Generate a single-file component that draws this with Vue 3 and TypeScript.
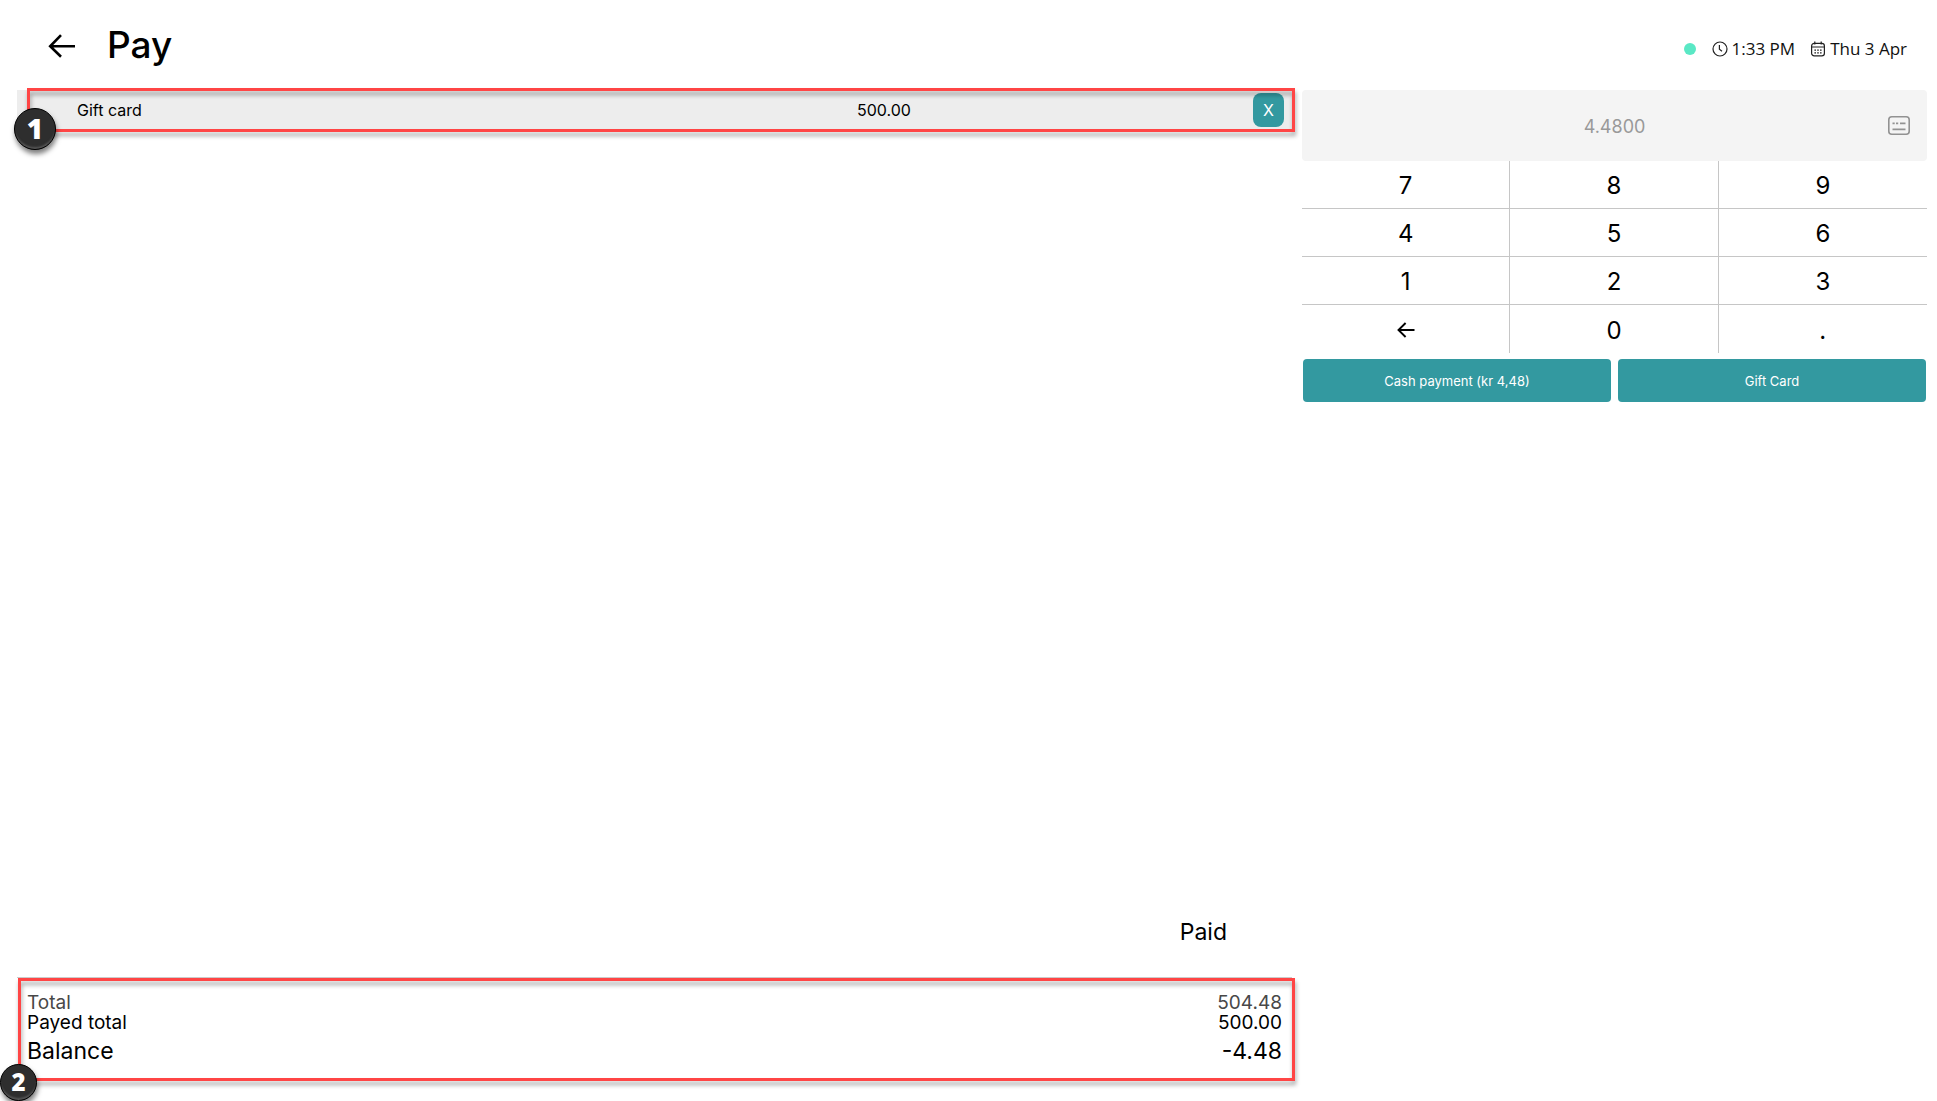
<script setup lang="ts">
interface Payment {
  name: string
  amount: string
}

interface TotalLine {
  label: string
  value: string
  kind: string
}

const payments: Payment[] = [{ name: 'Gift card', amount: '500.00' }]
const totals: TotalLine[] = [
  { label: 'Total', value: '504.48', kind: 'muted' },
  { label: 'Payed total', value: '500.00', kind: 'regular' },
  { label: 'Balance', value: '-4.48', kind: 'balance' },
]
const keys: string[] = ['7', '8', '9', '4', '5', '6', '1', '2', '3', 'back', '0', '.']
</script>

<template>
  <div class="app">
    <header class="header">
      <button class="back" type="button" aria-label="Back">
        <svg width="28" height="24" viewBox="0 0 28 24" fill="none" stroke="#000" stroke-width="2.6">
          <path d="M27 12.3H2.5M13 1.2 2.2 12.3 13 22.8" />
        </svg>
      </button>
      <h1>Pay</h1>
      <div class="status">
        <span class="dot"></span>
        <span class="status-item time">
          <svg width="16" height="16" viewBox="0 0 16 16" fill="none" stroke="#222" stroke-width="1.2">
            <circle cx="8" cy="8" r="7" />
            <path d="M7.4 4v4.3l2.6 2" />
          </svg>
          1:33 PM
        </span>
        <span class="status-item">
          <svg width="16" height="16" viewBox="0 0 16 16" fill="none" stroke="#222" stroke-width="1.2">
            <rect x="1.6" y="2.4" width="12.8" height="12.4" rx="2.6" />
            <path d="M1.6 6h12.8M4.8.6v3M11.2.6v3" />
            <path d="M4.4 9.2h1.6M7.2 9.2h1.6M10 9.2h1.6M4.4 11.8h1.6M7.2 11.8h1.6M10 11.8h1.6" />
          </svg>
          Thu 3 Apr
        </span>
      </div>
    </header>

    <main class="main">
      <section class="left">
        <div class="payments">
          <div v-for="p in payments" :key="p.name" class="payment">
            <span class="name">{{ p.name }}</span>
            <span class="amount">{{ p.amount }}</span>
            <button class="remove" type="button">X</button>
          </div>
          <div class="frame frame-list"></div>
          <span class="badge badge-one">1</span>
        </div>

        <div class="paid">Paid</div>

        <div class="summary">
          <div v-for="t in totals" :key="t.label" class="line" :class="t.kind">
            <span>{{ t.label }}</span>
            <span>{{ t.value }}</span>
          </div>
          <div class="frame frame-summary"></div>
          <span class="badge badge-two">2</span>
        </div>
      </section>

      <section class="right">
        <div class="display">
          <input type="text" placeholder="4.4800" aria-label="Amount" />
          <button class="keyboard" type="button" aria-label="Keyboard">
            <svg width="22" height="19" viewBox="0 0 22 19" fill="none" stroke="#929292">
              <rect x="0.8" y="0.8" width="20.4" height="17.4" rx="3" stroke-width="1.6" />
              <path d="M4.5 7.4h2.2M8 7.4h2.2M12 7.4h5.5M4.5 13.4h13" stroke-width="1.8" />
            </svg>
          </button>
        </div>
        <div class="keypad">
          <button v-for="k in keys" :key="k" class="key" type="button" :aria-label="k">
            <svg v-if="k === 'back'" width="18" height="16" viewBox="0 0 18 16" fill="none" stroke="#000" stroke-width="1.9">
              <path d="M17.5 8H1.6M8.6 1 1.5 8l7.1 7" />
            </svg>
            <template v-else>{{ k }}</template>
          </button>
        </div>
        <div class="actions">
          <button type="button">Cash payment (kr 4,48)</button>
          <button type="button">Gift Card</button>
        </div>
      </section>
    </main>
  </div>
</template>

<style>
body {
  margin: 0;
  background: #fff;
}
</style>

<style scoped>
.app {
  display: flex;
  flex-direction: column;
  box-sizing: border-box;
  min-height: 100vh;
  overflow: hidden;
  font-family: Inter, sans-serif;
  color: #000;
}

button {
  margin: 0;
  padding: 0;
  border: 0;
  background: none;
  font-family: inherit;
  color: inherit;
  cursor: pointer;
}

svg {
  display: block;
}

.header {
  display: flex;
  align-items: center;
  height: 90px;
  padding: 0 30px 0 48px;
}

.back {
  margin-top: 2px;
}

h1 {
  margin: 0 0 0 31px;
  font-size: 37px;
  line-height: 44px;
  font-weight: 500;
}

.status {
  display: flex;
  align-items: center;
  margin: 8px 0 0 auto;
  font: 17px/24px "Open Sans", sans-serif;
  color: #111;
}

.dot {
  width: 12px;
  height: 12px;
  margin-right: 16px;
  border-radius: 50%;
  background: #5ae8c5;
}

.status-item {
  display: flex;
  align-items: center;
  gap: 4px;
}

.time {
  margin-right: 15px;
}

.main {
  flex: 1;
  display: grid;
  grid-template-columns: 51fr 25fr;
  gap: 10px;
  padding: 0 10px 0 17px;
}

.left {
  display: flex;
  flex-direction: column;
}

.payments {
  position: relative;
}

.payment {
  display: flex;
  align-items: center;
  height: 40px;
  padding: 0 8px 0 60px;
  background: #ededed;
  font-size: 16px;
  line-height: 20px;
}

.name {
  flex: 780;
}

.amount {
  flex: 396;
}

.remove {
  width: 31px;
  height: 34px;
  border-radius: 8px;
  background: #3399a0;
  color: #fff;
  font-size: 16px;
}

.frame {
  position: absolute;
  border: 3px solid #ff4545;
  filter: drop-shadow(1px 4px 2px rgba(0, 0, 0, 0.35));
  pointer-events: none;
}

.frame-list {
  inset: -2px -3px -2px 10px;
}

.frame-summary {
  inset: 0 -3px 20px 1px;
}

.badge {
  position: absolute;
  display: flex;
  align-items: center;
  justify-content: center;
  box-sizing: border-box;
  padding-bottom: 2px;
  border: 1px solid #000;
  border-radius: 50%;
  background: #2e2e2e;
  color: #fff;
  font-family: "Noto Sans", sans-serif;
  font-weight: 900;
  box-shadow: 1px 4px 5px rgba(0, 0, 0, 0.5), inset 0 -3px 2px -1px #555;
}

.badge-one {
  left: -3px;
  top: 18px;
  width: 42px;
  height: 42px;
  font-size: 28px;
}

.badge-two {
  left: -17px;
  bottom: 0;
  width: 37px;
  height: 37px;
  font-size: 24px;
}

.paid {
  margin: auto 65px 31px auto;
  font-size: 23px;
  line-height: 28px;
}

.summary {
  position: relative;
  box-sizing: border-box;
  height: 124px;
  padding: 15px 10px 0 10px;
  border-top: 1px solid #ccc;
}

.line {
  display: flex;
  justify-content: space-between;
  font-size: 19px;
  line-height: 20px;
}

.muted {
  color: #484848;
}

.balance {
  margin-top: 4px;
  font-size: 23px;
  line-height: 28px;
}

.display {
  display: flex;
  align-items: center;
  height: 71px;
  padding: 0 17px 0 39px;
  border-radius: 4px;
  background: #f4f4f4;
}

.display input {
  flex: 1;
  min-width: 0;
  padding: 2px 0 0;
  border: 0;
  outline: 0;
  background: none;
  font: 18px/24px Inter, sans-serif;
  text-align: center;
}

.display input::placeholder {
  color: #999;
  opacity: 1;
}

.keypad {
  display: grid;
  grid-template-columns: repeat(3, 1fr);
  grid-auto-rows: 48px;
}

.key {
  display: flex;
  align-items: center;
  justify-content: center;
  padding-top: 2px;
  border-right: 1px solid #c6c6c6;
  border-bottom: 1px solid #c6c6c6;
  font-size: 24px;
}

.key:nth-child(3n) {
  border-right: 0;
}

.key:nth-child(n + 10) {
  border-bottom: 0;
}

.actions {
  display: flex;
  gap: 7px;
  padding: 6px 1px;
}

.actions button {
  flex: 1;
  height: 43px;
  border-radius: 4px;
  background: #3399a0;
  color: #fff;
  font-size: 13px;
}
</style>
